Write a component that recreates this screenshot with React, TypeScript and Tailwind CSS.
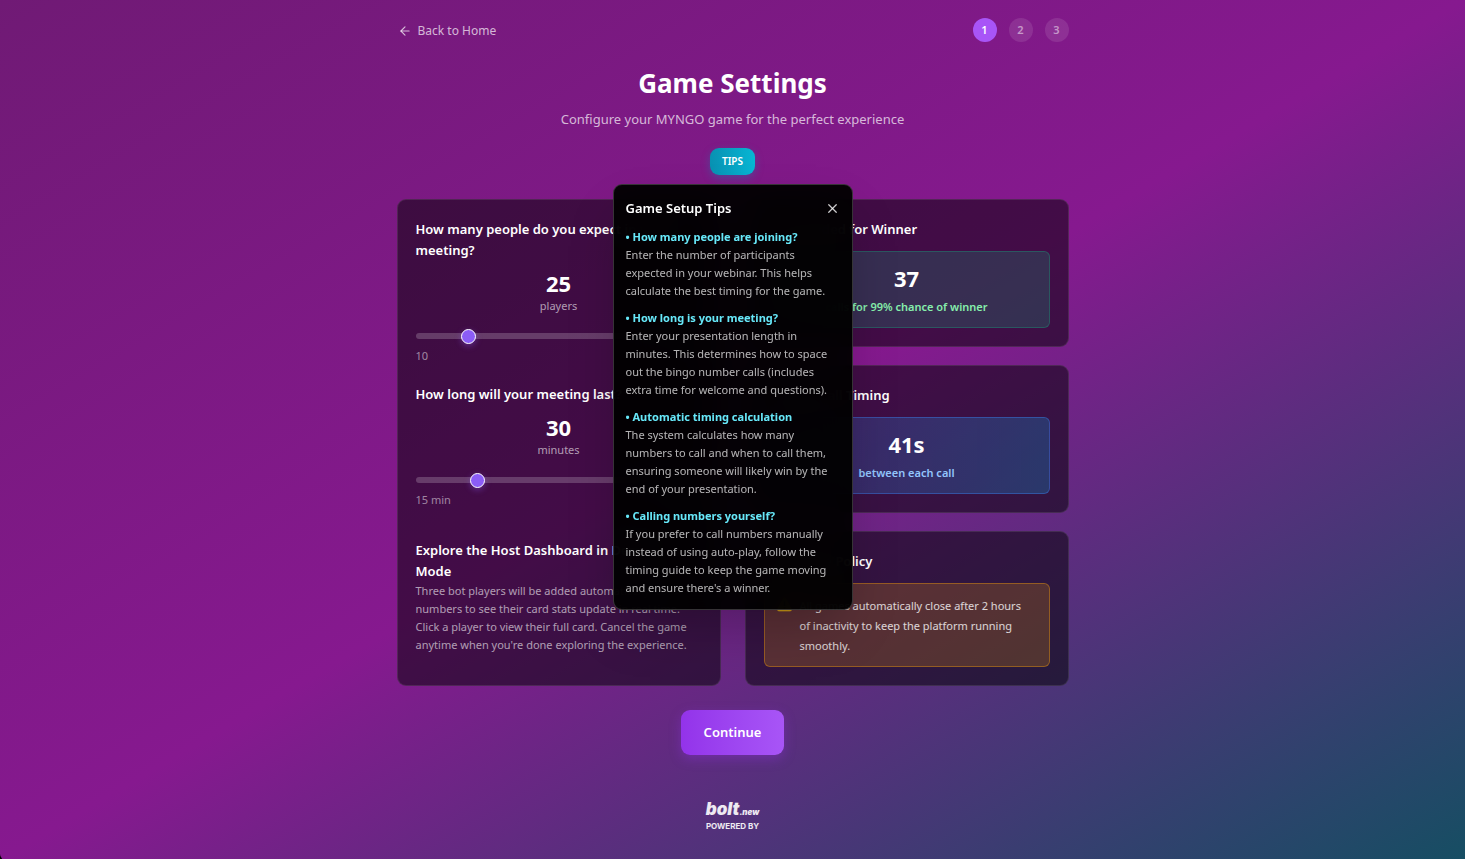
import React, { useState } from 'react';
import { ArrowLeft, X } from 'lucide-react';

const tips = [
  {
    title: 'How many people are joining?',
    body: 'Enter the number of participants expected in your webinar. This helps calculate the best timing for the game.',
  },
  {
    title: 'How long is your meeting?',
    body: 'Enter your presentation length in minutes. This determines how to space out the bingo number calls (includes extra time for welcome and questions).',
  },
  {
    title: 'Automatic timing calculation',
    body: 'The system calculates how many numbers to call and when to call them, ensuring someone will likely win by the end of your presentation.',
  },
  {
    title: 'Calling numbers yourself?',
    body: "If you prefer to call numbers manually instead of using auto-play, follow the timing guide to keep the game moving and ensure there's a winner.",
  },
];

const cardClass = 'rounded-[9px] border border-white/10 bg-black/50 px-[18px] pt-[19px] pb-[18px]';
const headingClass = 'text-[13px] leading-[21px] font-semibold text-white';

function Slider(props: {
  id: string;
  label: string;
  unit: string;
  min: number;
  max: number;
  value: number;
  minLabel: string;
  maxLabel: string;
  onChange: (value: number) => void;
}) {
  return (
    <div>
      <label htmlFor={props.id} className={`block ${headingClass}`}>
        {props.label}
      </label>
      <div className="mt-2 text-center">
        <div className="text-[22px] leading-[28px] font-bold text-white">{props.value}</div>
        <div className="text-[11px] leading-[18px] text-white/60">{props.unit}</div>
      </div>
      <input
        id={props.id}
        type="range"
        min={props.min}
        max={props.max}
        value={props.value}
        onChange={(e) => props.onChange(Number(e.target.value))}
        className="mt-[18px] block h-[6px] w-full cursor-pointer appearance-none rounded-[3px] bg-white/20 [&::-webkit-slider-thumb]:h-[15px] [&::-webkit-slider-thumb]:w-[15px] [&::-webkit-slider-thumb]:appearance-none [&::-webkit-slider-thumb]:rounded-full [&::-webkit-slider-thumb]:border [&::-webkit-slider-thumb]:border-solid [&::-webkit-slider-thumb]:border-white [&::-webkit-slider-thumb]:bg-[#8b5cf6] [&::-webkit-slider-thumb]:shadow-[0_2px_6px_rgba(139,92,246,0.4)]"
      />
      <div className="mt-2 flex justify-between text-[11px] leading-[18px] text-white/50">
        <span>{props.minLabel}</span>
        <span>{props.maxLabel}</span>
      </div>
    </div>
  );
}

function WarningIcon() {
  return (
    <svg viewBox="0 0 15 16" className="h-4 w-[15px] shrink-0" aria-hidden="true">
      <path
        d="M6.6 2.2Q7.5.8 8.4 2.2L14.2 13Q14.8 14.8 13.2 14.8H1.8Q.2 14.8.8 13Z"
        fill="#c8920f"
        stroke="#d9a514"
        strokeWidth="1"
        strokeLinejoin="round"
      />
      <path d="M7.5 5.5v4.4M7.5 11.2v1.2" stroke="#2b1c08" strokeWidth="1.4" />
    </svg>
  );
}

export default function App() {
  const [players, setPlayers] = useState(25);
  const [minutes, setMinutes] = useState(30);
  const [open, setOpen] = useState(true);

  return (
    <div className="bg-black">
      <div className="min-h-screen rounded-bl-[6px] bg-[linear-gradient(to_bottom_right,#701a75,#86198f,#164e63)] px-4 pt-[18px] pb-[29px] font-['Noto_Sans','Open_Sans',sans-serif] text-white">
        <div className="mx-auto max-w-2xl">
          <header className="flex items-center justify-between">
            <a href="#home" className="flex items-center gap-[6px] pt-[2px] pl-[1px] text-[12px] leading-[18px] text-white/70">
              <ArrowLeft className="h-[14px] w-[14px]" />
              Back to Home
            </a>
            <ol className="flex gap-3 text-[11px] font-semibold">
              <li className="flex h-6 w-6 items-center justify-center rounded-full bg-[#a855f7] text-white">1</li>
              <li className="flex h-6 w-6 items-center justify-center rounded-full bg-white/10 text-white/50">2</li>
              <li className="flex h-6 w-6 items-center justify-center rounded-full bg-white/10 text-white/50">3</li>
            </ol>
          </header>

          <div className="mt-[25px] text-center">
            <h1 className="text-[26px] leading-[32px] font-bold">Game Settings</h1>
            <p className="mt-[10px] text-[13px] leading-[21px] text-white/70">
              Configure your MYNGO game for the perfect experience
            </p>
          </div>

          <div className="relative mt-[18px] flex justify-center">
            <button
              type="button"
              onClick={() => setOpen(!open)}
              className="h-[27px] rounded-[9px] bg-linear-to-r from-[#0891b2] to-[#06b6d4] px-3 text-[10px] font-semibold text-white shadow-[0_3px_8px_rgba(8,145,178,0.35)]"
            >
              TIPS
            </button>
            {open && (
              <div
                role="dialog"
                aria-label="Game Setup Tips"
                className="absolute top-full left-1/2 z-10 mt-[9px] w-60 -translate-x-1/2 rounded-[9px] border border-white/20 bg-black/95 px-3 pt-[11px] pb-3 shadow-2xl backdrop-blur-lg"
              >
                <div className="flex items-center justify-between pt-[2px]">
                  <h2 className={headingClass}>Game Setup Tips</h2>
                  <button type="button" aria-label="Close" onClick={() => setOpen(false)} className="text-white/80">
                    <X className="h-[15px] w-[15px]" />
                  </button>
                </div>
                <div className="mt-[9px] flex flex-col gap-[9px] text-[11px] leading-[18px]">
                  {tips.map((tip) => (
                    <div key={tip.title}>
                      <h3 className="font-bold text-[#67e8f9]">• {tip.title}</h3>
                      <p className="text-white/70">{tip.body}</p>
                    </div>
                  ))}
                </div>
              </div>
            )}
          </div>

          <main className="mt-6 grid grid-cols-2 gap-6">
            <section className={`${cardClass} flex flex-col`}>
              <Slider
                id="players"
                label="How many people do you expect in your meeting?"
                unit="players"
                min={10}
                max={100}
                value={players}
                minLabel="10"
                maxLabel="100"
                onChange={setPlayers}
              />
              <div className="mt-[19px]">
                <Slider
                  id="minutes"
                  label="How long will your meeting last?"
                  unit="minutes"
                  min={15}
                  max={90}
                  value={minutes}
                  minLabel="15 min"
                  maxLabel="90 min"
                  onChange={setMinutes}
                />
              </div>
              <div className="mt-[31px]">
                <h2 className={`pr-8 ${headingClass}`}>Explore the Host Dashboard in Demo Mode</h2>
                <p className="text-[11px] leading-[18px] text-white/60">
                  Three bot players will be added automatically. Call numbers to see their card stats update in real
                  time. Click a player to view their full card. Cancel the game anytime when you're done exploring the
                  experience.
                </p>
              </div>
            </section>

            <div className="flex flex-col gap-[18px]">
              <section className={cardClass}>
                <h2 className={headingClass}>Calls Needed for Winner</h2>
                <div className="mt-[11px] rounded-md border border-[#10b981]/30 bg-[#10b981]/20 px-3 pt-3 pb-[11px] text-center">
                  <div className="text-[22px] leading-[28px] font-bold">37</div>
                  <div className="mt-[6px] text-[11px] leading-[18px] font-semibold text-[#86efac]">
                    calls for 99% chance of winner
                  </div>
                </div>
              </section>
              <section className={cardClass}>
                <h2 className={headingClass}>Number Call Timing</h2>
                <div className="mt-[11px] rounded-md border border-[#3b82f6]/40 bg-linear-to-r from-[#3b82f6]/20 to-[#0ea5e9]/25 px-3 pt-3 pb-[11px] text-center">
                  <div className="text-[22px] leading-[28px] font-bold">41s</div>
                  <div className="mt-[6px] text-[11px] leading-[18px] font-semibold text-[#93c5fd]">
                    between each call
                  </div>
                </div>
              </section>
              <section className={cardClass}>
                <h2 className={headingClass}>Auto-Close Policy</h2>
                <div className="mt-[11px] flex gap-2 rounded-md border border-[#f59e0b]/40 bg-[#f59e0b]/20 pt-3 pr-5 pb-[10px] pl-3">
                  <WarningIcon />
                  <p className="text-[11px] leading-[20px] text-white/80">
                    All games automatically close after 2 hours of inactivity to keep the platform running smoothly.
                  </p>
                </div>
              </section>
            </div>
          </main>

          <div className="mt-6 flex justify-center">
            <button
              type="button"
              className="h-[45px] rounded-[9px] bg-linear-to-r from-[#9333ea] to-[#a855f7] px-[23px] text-[13px] font-semibold text-white shadow-[0_4px_12px_rgba(147,51,234,0.35)]"
            >
              Continue
            </button>
          </div>

          <footer className="mt-[46px] flex flex-col items-center font-['Inter',sans-serif] text-white/90">
            <div className="flex items-baseline leading-[17px] font-black italic">
              <span className="text-[17px]">bolt</span>
              <span className="text-[8px]">.new</span>
            </div>
            <div className="text-[8px] leading-[10px] font-bold">POWERED BY</div>
          </footer>
        </div>
      </div>
    </div>
  );
}
